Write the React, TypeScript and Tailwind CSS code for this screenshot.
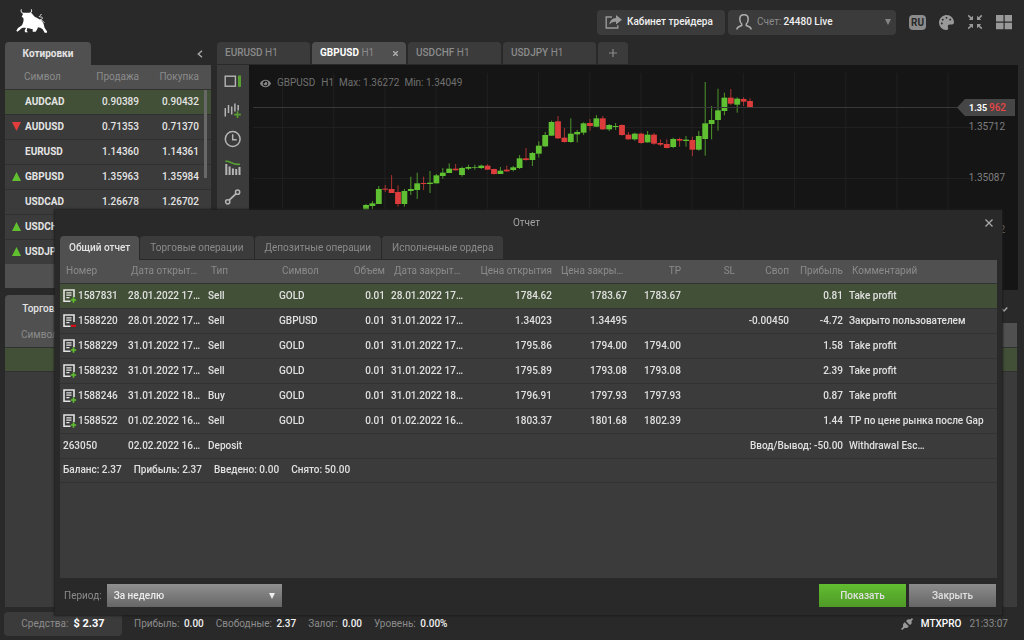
import React, { useState } from 'react';
import { FaEye, FaPalette } from 'react-icons/fa';

type Quote = { symbol: string; sell?: string; buy?: string; dir?: 'up' | 'down' };

const quotes: Quote[] = [
  { symbol: 'AUDCAD', sell: '0.90389', buy: '0.90432' },
  { symbol: 'AUDUSD', sell: '0.71353', buy: '0.71370', dir: 'down' },
  { symbol: 'EURUSD', sell: '1.14360', buy: '1.14361' },
  { symbol: 'GBPUSD', sell: '1.35963', buy: '1.35984', dir: 'up' },
  { symbol: 'USDCAD', sell: '1.26678', buy: '1.26702' },
  { symbol: 'USDCHF', dir: 'up' },
  { symbol: 'USDJPY', dir: 'up' },
];

const chartTabs = ['EURUSD', 'GBPUSD', 'USDCHF', 'USDJPY'];
const reportTabs = ['Общий отчет', 'Торговые операции', 'Депозитные операции', 'Исполненные ордера'];

const orders = [
  { id: '1587831', open: '28.01.2022 17…', type: 'Sell', symbol: 'GOLD', close: '28.01.2022 17…', openPrice: '1784.62', closePrice: '1783.67', tp: '1783.67', swap: '', profit: '0.81', comment: 'Take profit' },
  { id: '1588220', open: '28.01.2022 17…', type: 'Sell', symbol: 'GBPUSD', close: '31.01.2022 17…', openPrice: '1.34023', closePrice: '1.34495', tp: '', swap: '-0.00450', profit: '-4.72', comment: 'Закрыто пользователем' },
  { id: '1588229', open: '31.01.2022 17…', type: 'Sell', symbol: 'GOLD', close: '31.01.2022 17…', openPrice: '1795.86', closePrice: '1794.00', tp: '1794.00', swap: '', profit: '1.58', comment: 'Take profit' },
  { id: '1588232', open: '31.01.2022 17…', type: 'Sell', symbol: 'GOLD', close: '31.01.2022 17…', openPrice: '1795.89', closePrice: '1793.08', tp: '1793.08', swap: '', profit: '2.39', comment: 'Take profit' },
  { id: '1588246', open: '31.01.2022 18…', type: 'Buy', symbol: 'GOLD', close: '31.01.2022 18…', openPrice: '1796.91', closePrice: '1797.93', tp: '1797.93', swap: '', profit: '0.87', comment: 'Take profit' },
  { id: '1588522', open: '01.02.2022 16…', type: 'Sell', symbol: 'GOLD', close: '01.02.2022 16…', openPrice: '1803.37', closePrice: '1801.68', tp: '1802.39', swap: '', profit: '1.44', comment: 'TP по цене рынка после Gap' },
];

// high, body top, body bottom, low (negative high marks a falling candle)
const candles = [
  [402, 405, 419, 419], [393, 400, 408, 419], [348, 357, 402, 402], [-345, 356, 359, 366],
  [-315, 357, 369, 369], [-346, 366, 402, 410], [357, 363, 402, 410], [320, 357, 363, 375],
  [308, 340, 360, 387], [-320, 339, 342, 360], [303, 338, 342, 369], [312, 316, 340, 340],
  [294, 308, 318, 326], [280, 296, 309, 309], [-282, 296, 301, 301], [290, 294, 315, 320],
  [284, 291, 296, 300], [284, 291, 293, 299], [284, 287, 294, 297], [-283, 287, 299, 299],
  [-296, 297, 312, 314], [291, 302, 312, 312], [-287, 299, 304, 305], [288, 292, 300, 304],
  [255, 265, 294, 297], [-234, 265, 270, 272], [246, 249, 270, 288], [214, 227, 251, 263],
  [186, 195, 229, 231], [152, 156, 197, 198], [-138, 154, 205, 207], [-174, 203, 216, 218],
  [145, 191, 216, 218], [180, 186, 193, 217], [157, 160, 188, 195], [-147, 159, 168, 182],
  [135, 145, 170, 171], [-138, 145, 178, 180], [162, 165, 178, 183], [159, 168, 171, 180],
  [-163, 165, 195, 197], [-186, 194, 208, 209], [188, 191, 208, 212], [-188, 191, 219, 221],
  [183, 194, 217, 218], [-189, 194, 221, 224], [-208, 219, 224, 228], [-208, 222, 234, 235],
  [203, 207, 231, 234], [-203, 207, 212, 230], [198, 209, 213, 230], [-200, 210, 239, 258],
  [183, 198, 239, 242], [36, 160, 207, 257], [108, 150, 162, 208], [56, 121, 150, 182],
  [68, 83, 123, 136], [-57, 83, 101, 105], [82, 86, 104, 128], [-82, 87, 95, 108],
  [-85, 93, 113, 113],
];

const gridX = Array.from({ length: 14 }, (_, i) => 33.5 + i * 51.2);

const Bull = () => (
  <svg className="h-[26px] w-8" viewBox="48 20 96 78" fill="#fff">
    <path d="M64 24c-2 6 0 11 6 12M94 24c2 6 0 11-6 12" fill="none" stroke="#fff" strokeWidth="3" />
    <path d="M68 34h24c6 3 8 8 12 12 8 4 18 9 24 16 4 6 4 12 6 18l7 10v4h-7l-6-10c-4-4-10-6-14-6l-2 5-5 8h-9v-8c-6 0-11-2-16-3l-2 8 4 5h-9l-1-6 4-7c-6-1-14-1-18 5l-8 6-3-3 5-8 12-8c4-8 6-16 4-22l-5-4 4-8z" />
    <path d="M133 64c-3-5-8-7-14-8 7-2 9-4 8-7-2-4-9 0-9-3 0-3 5-3 6-8" fill="none" stroke="#fff" strokeWidth="2.5" />
  </svg>
);

const OrderIcon = ({ loss }: { loss: boolean }) => (
  <svg className="h-[14px] w-[14px] shrink-0" viewBox="0 0 14 14" fill="none">
    <path d="M7.5 12.2H1V1h10v7" stroke="#e4e4e4" strokeWidth="1.6" />
    <path d="M3.3 3.8h5.2M3.3 6.2h5.2M3.3 8.6h3.2" stroke="#e4e4e4" strokeWidth="1.2" />
    {loss ? <path d="M8 11.8h5" stroke="#e00b12" strokeWidth="2" /> : <path d="M7.8 11h5.4M10.5 8.3v5.4" stroke="#61c02f" strokeWidth="1.7" />}
  </svg>
);

const ChartTools = () => (
  <div className="flex w-8 shrink-0 flex-col items-center gap-[9px] bg-[#3b3b3b] pt-[6px]">
    <button aria-label="Panels">
      <svg className="h-5 w-5" viewBox="0 0 20 20" fill="none">
        <rect x="2.2" y="5.2" width="10.2" height="10" stroke="#b5b5b5" strokeWidth="1.4" />
        <path d="M16.5 4.5v11.4" stroke="#579f31" strokeWidth="3" />
      </svg>
    </button>
    <button aria-label="Chart type">
      <svg className="h-5 w-5" viewBox="0 0 20 20" fill="none">
        <path d="M2.3 8v8.5M5.5 5v8M8.7 6.5v8M11.9 3.5v8M15.2 5v5.5" stroke="#b5b5b5" strokeWidth="1.5" />
        <path d="M11.2 14.6h6.6M14.5 11.3v6.6" stroke="#579f31" strokeWidth="1.6" />
      </svg>
    </button>
    <button aria-label="Timeframe">
      <svg className="h-5 w-5" viewBox="0 0 20 20" fill="none" stroke="#b5b5b5">
        <circle cx="9.7" cy="10" r="7.4" strokeWidth="1.5" />
        <path d="M9.7 5.2v5.6h4" strokeWidth="1.5" />
      </svg>
    </button>
    <button aria-label="Indicators">
      <svg className="h-5 w-5" viewBox="0 0 20 20" fill="none">
        <path d="M3.3 6v11M6.6 8.6V17M9.9 10.4V17M13.2 11v6M16.5 9v8" stroke="#b5b5b5" strokeWidth="2" />
        <path d="M2.3 3.3c5-1 6 3.7 14.7 3" stroke="#579f31" strokeWidth="1.6" />
      </svg>
    </button>
    <button aria-label="Drawing">
      <svg className="h-5 w-5" viewBox="0 0 20 20" fill="none" stroke="#b5b5b5" strokeWidth="1.5">
        <circle cx="4.7" cy="14.8" r="2.1" />
        <circle cx="14.6" cy="5.2" r="2.1" />
        <path d="M6.2 13.2l6.9-6.6" strokeWidth="1.8" />
      </svg>
    </button>
  </div>
);

const PriceChart = () => (
  <div className="relative min-w-0 flex-1 bg-[#151515]">
    <svg className="h-[225px] w-full" viewBox="0 0 769 225" preserveAspectRatio="xMaxYMin slice">
      {gridX.map((x) => (
        <path key={x} d={`M${x} 8V225`} stroke="#1f1f1f" strokeWidth="1.2" />
      ))}
      <path d="M4 62.5H722M4 113.5H722M4 164.5H722" stroke="#202020" />
      {candles.map(([h, top, bottom, low], i) => {
        const color = h < 0 ? '#dc3c3c' : '#5fc032';
        const x = 117 + i * 6.4;
        return (
          <g key={i} fill={color}>
            <rect x={x - 0.5} y={Math.abs(h) / 3 + 5} width={1} height={(low - Math.abs(h)) / 3} opacity={0.75} />
            <rect x={x - 2.9} y={top / 3 + 5} width={5.8} height={(bottom - top) / 3} />
          </g>
        );
      })}
      <path d="M4 42.5H710" stroke="#383838" />
      <path d="M708 42.5l8-8.5h50v17h-50z" fill="#464646" />
      <g fontFamily="Roboto, sans-serif" fontSize="10" fill="#7f7f7f">
        <text x="720" y="46" fill="#fff" fontSize="9" fontWeight="700">1.35</text>
        <text x="740" y="46" fill="#e64545" fontWeight="500">962</text>
        <text x="756" y="65" textAnchor="end">1.35712</text>
        <text x="756" y="116" textAnchor="end">1.35087</text>
        <text x="756" y="168" textAnchor="end">1.34462</text>
      </g>
    </svg>
    <div className="absolute left-[11px] top-3 flex items-center gap-[6px] whitespace-pre text-[10px] leading-3 text-[#707070]">
      <FaEye className="h-[11px] w-[11px] text-[#858585]" />
      <span>GBPUSD</span>
      <span>H1  Max: 1.36272  Min: 1.34049</span>
    </div>
  </div>
);

const QuotesPanel = () => (
  <aside className="w-[206px] shrink-0">
    <div className="flex h-[23px] items-center justify-between">
      <button className="h-full w-[86px] rounded-t bg-[#505050] font-bold text-[#e4e4e4]">Котировки</button>
      <button aria-label="Свернуть" className="mr-2">
        <svg className="h-2 w-[6px]" viewBox="0 0 6 8" fill="none" stroke="#aaa" strokeWidth="1.4"><path d="M5 .7L1.3 4 5 7.3" /></svg>
      </button>
    </div>
    <div className="relative">
      <table className="w-full table-fixed bg-[#3b3b3b]">
        <thead className="bg-[#505050] text-[#8b8b8b]">
          <tr className="h-6">
            <th className="w-[76px] pl-[19px] text-left font-normal">Символ</th>
            <th className="text-right font-normal">Продажа</th>
            <th className="w-[72px] pr-3 text-right font-normal">Покупка</th>
          </tr>
        </thead>
        <tbody className="text-[#e4e4e4]">
          {quotes.map((q, i) => (
            <tr key={q.symbol} className={i === 0 ? 'h-[25px] border-t border-[#303030] bg-[#425037]' : 'h-[25px] border-t border-[#303030]'}>
              <td className="font-bold">
                <div className="flex items-center pl-[7px]">
                  <span className="w-[13px]">
                    {q.dir && (
                      <svg className="h-[9px] w-[9px]" viewBox="0 0 9 9">
                        {q.dir === 'up' ? <path d="M4.5 0L9 9H0z" fill="#61c02f" /> : <path d="M0 0h9L4.5 9z" fill="#e23c3c" />}
                      </svg>
                    )}
                  </span>
                  {q.symbol}
                </div>
              </td>
              <td className="text-right font-medium">{q.sell}</td>
              <td className="pr-3 text-right font-medium">{q.buy}</td>
            </tr>
          ))}
        </tbody>
      </table>
      <div className="absolute right-1 top-[25px] h-[88px] w-[3px] bg-[#686868]" />
    </div>
    <div className="h-6 bg-[#505050]" />
  </aside>
);

const Header = () => (
  <header className="flex h-[42px] items-center justify-between pl-4 pr-3">
    <Bull />
    <div className="flex items-center gap-[3px] pt-[2px]">
      <button className="flex h-[25px] w-32 items-center gap-[5px] rounded-sm bg-[#3b3b3b] pl-2 font-medium text-[#f0f0f0]">
        <svg className="h-4 w-[17px]" viewBox="0 0 17 16" fill="none">
          <path d="M7 3H1.2v11h11.6v-2.8" stroke="#999" strokeWidth="1.4" />
          <path d="M11 1l6 4.800-6 4.800V7.800C8 7.600 6 8.600 4.300 10.800 4.800 6.800 7 4.200 11 4z" fill="#999" />
        </svg>
        Кабинет трейдера
      </button>
      <label className="relative flex h-[25px] w-[168px] items-center rounded-sm bg-[#3b3b3b] pl-2 text-[#8b8b8b]">
        <svg className="mr-[5px] h-4 w-4" viewBox="0 0 16 16" fill="none" stroke="#b0b0b0" strokeWidth="1.5">
          <path d="M.8 15.500c.3-2.300 1.600-2.800 4.900-4V10C4.300 8.800 3.800 7 3.800 5c0-2.600 1.600-4.200 4.200-4.200S12.200 2.400 12.200 5c0 2-.5 3.800-1.900 5v1.500c3.300 1.200 4.600 1.700 4.900 4" />
        </svg>
        Счет:
        <select className="ml-[2px] flex-1 appearance-none bg-transparent font-medium text-[#f0f0f0]">
          <option>24480 Live</option>
        </select>
        <svg className="absolute right-[5px] h-[6px] w-[6px]" viewBox="0 0 6 6"><path d="M0 0h6L3 6z" fill="#858585" /></svg>
      </label>
      <button className="ml-[10px] h-[15px] w-[17px] rounded-sm bg-[#8b8b8b] text-center text-[10px] font-bold leading-[15px] text-[#292929]">RU</button>
      <button aria-label="Тема" className="ml-[10px]"><FaPalette className="h-[15px] w-[15px] text-[#999]" /></button>
      <button aria-label="Свернуть окно" className="ml-[10px]">
        <svg className="h-4 w-4" viewBox="0 0 16 16" fill="#999">
          <path d="M1.800.8l2.500 2.500L6 1.800V6H1.800l1.400-1.500L.7 2zM14.200.8l-2.500 2.500L10 1.800V6h4.200l-1.400-1.500L15.300 2zM1.800 15.200l2.500-2.500L6 14.200V10H1.800l1.400 1.500L.7 14zM14.200 15.200l-2.500-2.500-1.700 1.500V10h4.200l-1.400 1.500 2.500 2.500z" />
        </svg>
      </button>
      <button aria-label="Раскладка" className="ml-[10px]">
        <svg className="h-4 w-4" viewBox="0 0 16 16" fill="#999"><path d="M0 1h7.500v6.500H0zM8.700 1H16v6.500H8.700zM0 8.700h7.500v6.500H0zM8.700 8.700H16v6.500H8.700z" /></svg>
      </button>
    </div>
  </header>
);

const ReportDialog = () => {
  const [tab, setTab] = useState(0);

  return (
    <div role="dialog" aria-label="Отчет" className="fixed bottom-[25px] left-[55px] right-[22px] top-[210px] flex flex-col bg-[#292929] px-[5px] shadow-[0_0_2px_1px_#1c1c1c]">
      <div className="relative flex h-[26px] shrink-0 items-center justify-center pr-1 text-[#a5a5a5]">
        Отчет
        <button aria-label="Закрыть" className="absolute right-1">
          <svg className="h-[8px] w-[8px]" viewBox="0 0 8 8" stroke="#aaa" strokeWidth="1.3"><path d="M.5.5l7 7M7.5.5l-7 7" /></svg>
        </button>
      </div>
      <div className="flex h-6 shrink-0 gap-px">
        {reportTabs.map((name, i) => (
          <button
            key={name}
            onClick={() => setTab(i)}
            className={i === tab ? 'rounded-t bg-[#505050] px-[9px] font-medium text-[#e4e4e4]' : 'mb-px rounded-t bg-[#3b3b3b] px-[10px] text-[#8b8b8b]'}
          >
            {name}
          </button>
        ))}
      </div>
      <div className="min-h-0 flex-1 bg-[#3b3b3b]">
        <table className="w-full table-fixed whitespace-nowrap text-[#e0e0e0]">
          <colgroup>
            <col className="w-[65px]" />
            <col className="w-[80px]" />
            <col className="w-[71px]" />
            <col className="w-[54px]" />
            <col className="w-[58px]" />
            <col className="w-[80px]" />
            <col className="w-[87px]" />
            <col className="w-[75px]" />
            <col className="w-[54px]" />
            <col className="w-[54px]" />
            <col className="w-[54px]" />
            <col className="w-[54px]" />
            <col />
          </colgroup>
          <thead className="bg-[#505050] text-[#8b8b8b]">
            <tr className="h-[23px] *:font-normal">
              <th className="pl-[6px] text-left">Номер</th>
              <th className="pl-[6px] text-left">Дата открыт…</th>
              <th className="pl-[6px] text-left">Тип</th>
              <th className="pl-[6px] text-left">Символ</th>
              <th className="pr-[3px] text-right">Объем</th>
              <th className="pl-[6px] text-left">Дата закрыт…</th>
              <th className="pr-[3px] text-right">Цена открытия</th>
              <th className="pl-[6px] text-left">Цена закры…</th>
              <th className="pr-[3px] text-right">TP</th>
              <th className="pr-[3px] text-right">SL</th>
              <th className="pr-[3px] text-right">Своп</th>
              <th className="pr-[3px] text-right">Прибыль</th>
              <th className="pl-[6px] text-left">Комментарий</th>
            </tr>
          </thead>
          <tbody className="font-medium">
            {orders.map((o, i) => (
              <tr key={o.id} className={i === 0 ? 'h-[25px] border-y border-[#323232] bg-[#425037] *:px-[3px]' : 'h-[25px] border-y border-[#323232] *:px-[3px]'}>
                <td><div className="flex items-center gap-px"><OrderIcon loss={Number(o.profit) < 0} />{o.id}</div></td>
                <td>{o.open}</td>
                <td>{o.type}</td>
                <td>{o.symbol}</td>
                <td className="text-right">0.01</td>
                <td>{o.close}</td>
                <td className="text-right">{o.openPrice}</td>
                <td className="text-right">{o.closePrice}</td>
                <td className="text-right">{o.tp}</td>
                <td />
                <td className="text-right">{o.swap}</td>
                <td className="text-right">{o.profit}</td>
                <td>{o.comment}</td>
              </tr>
            ))}
            <tr className="h-[25px] border-y border-[#323232] *:px-[3px]">
              <td>263050</td>
              <td>02.02.2022 16…</td>
              <td>Deposit</td>
              <td colSpan={9} className="text-right">Ввод/Вывод: -50.00</td>
              <td>Withdrawal Esc…</td>
            </tr>
            <tr className="h-6 border-y border-[#323232] *:px-[3px]">
              <td colSpan={13}>
                <div className="flex gap-3">
                  <span>Баланс: 2.37</span>
                  <span>Прибыль: 2.37</span>
                  <span>Введено: 0.00</span>
                  <span>Снято: 50.00</span>
                </div>
              </td>
            </tr>
          </tbody>
        </table>
      </div>
      <div className="flex h-[37px] shrink-0 items-center justify-between pb-[2px] pl-1 pr-px text-[#8b8b8b]">
        <label className="relative flex items-center gap-[5px]">
          Период:
          <select className="h-[23px] w-[175px] appearance-none bg-linear-to-b from-[#909090] to-[#666] px-[7px] font-medium text-[#ececec]">
            <option>За неделю</option>
          </select>
          <svg className="absolute right-[7px] h-[6px] w-[6px]" viewBox="0 0 6 6"><path d="M0 0h6L3 6z" fill="#eee" /></svg>
        </label>
        <div className="flex gap-[3px] font-medium text-[#e0e0e0]">
          <button className="h-[23px] w-[87px] bg-linear-to-b from-[#62bd31] to-[#4e9a26]">Показать</button>
          <button className="h-[23px] w-[87px] bg-linear-to-b from-[#8c8c8c] to-[#666]">Закрыть</button>
        </div>
      </div>
    </div>
  );
};

const StatusBar = () => (
  <footer className="flex h-[33px] shrink-0 items-center justify-between pl-1 pr-4 text-[#8b8b8b]">
    <div className="flex items-center gap-3">
      <div className="flex h-6 w-[118px] items-center justify-center gap-[5px] rounded-sm bg-[#3b3b3b]">
        Средства: <b className="text-[11px] text-white">$ 2.37</b>
      </div>
      {[['Прибыль:', '0.00'], ['Свободные:', '2.37'], ['Залог:', '0.00'], ['Уровень:', '0.00%']].map(([name, value]) => (
        <span key={name}>
          {name} <b className="ml-[2px] font-medium text-[#f0f0f0]">{value}</b>
        </span>
      ))}
    </div>
    <div className="flex items-center gap-2">
      <svg className="h-3 w-3" viewBox="0 0 12 12">
        <path d="M3.800 4.200l4 4c-1.200 1.800-2.800 2.200-4.200 1.700L1.200 12 0 11l2.200-2.200C1.500 7.300 2 5.500 3.800 4.200zM5.300 3.500l3.200 3.300c2 .3 2.500-2 2-3.900L12 1.200 11 0 9.200 1.500C7.500.8 5.500 1.500 5.300 3.500z" fill="#999" />
      </svg>
      <b className="font-medium text-white">MTXPRO</b>
      <span>21:33:07</span>
    </div>
  </footer>
);

const App: React.FC = () => {
  const [active, setActive] = useState('GBPUSD');

  return (
    <div className="flex min-h-screen flex-col bg-[#292929] font-['Roboto',sans-serif] text-[10px] leading-[14px]">
      <Header />
      <div className="flex gap-[6px] pl-[5px] pr-[6px]">
        <QuotesPanel />
        <main className="min-w-0 flex-1">
          <div className="flex h-[23px] gap-[2px] pb-px">
            {chartTabs.map((name) => (
              <button
                key={name}
                onClick={() => setActive(name)}
                className={
                  name === active
                    ? 'flex w-[94px] items-center justify-between rounded-t bg-[#505050] px-2 text-[#8b8b8b]'
                    : 'flex w-[93px] items-center justify-between rounded-t bg-[#3b3b3b] px-2 text-[#8b8b8b]'
                }
              >
                <span><b className={name === active ? 'text-white' : 'font-medium'}>{name}</b> H1</span>
                {name === active && (
                  <svg className="h-[5px] w-[5px]" viewBox="0 0 5 5" stroke="#aaa" strokeWidth="1.5"><path d="M0 0l5 5M5 0L0 5" /></svg>
                )}
              </button>
            ))}
            <button aria-label="Добавить" className="flex w-[30px] items-center justify-center rounded-t bg-[#3b3b3b]">
              <svg className="h-2 w-2" viewBox="0 0 8 8" stroke="#8b8b8b" strokeWidth="1.2"><path d="M0 4h8M4 0v8" /></svg>
            </button>
          </div>
          <div className="flex">
            <ChartTools />
            <PriceChart />
          </div>
        </main>
      </div>
      <section className="ml-[5px] mr-[7px] mt-[5px] flex flex-1 flex-col bg-[#3b3b3b]">
        <div className="flex h-7 items-center justify-between bg-[#292929]">
          <button className="h-full w-[86px] rounded-t bg-[#505050] pr-2 font-medium text-[#e4e4e4]">Торговля</button>
          <svg className="mr-[9px] h-[5px] w-2" viewBox="0 0 8 5" fill="none" stroke="#aaa" strokeWidth="1.4"><path d="M.7.5L4 4 7.300.5" /></svg>
        </div>
        <div className="flex h-6 items-center bg-[#505050] px-4 text-[#8b8b8b]">Символ</div>
        <div className="h-[25px] border-y border-[#303030] bg-[#425037]" />
      </section>
      <StatusBar />
      <ReportDialog />
    </div>
  );
};

export default App;
